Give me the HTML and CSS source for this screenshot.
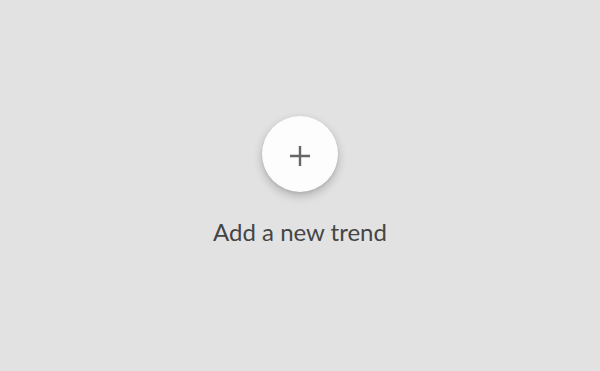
FILE: index.html
```html
<!DOCTYPE html>
<html lang="en">
<head>
    <meta charset="UTF-8">
    <title>Trends</title>
    <link rel="stylesheet" href="styles.css">
</head>
<body>
    <div class="empty-state">
        <button class="add-button" aria-label="Add a new trend">
            <svg width="22" height="22" viewBox="0 0 22 22">
                <path d="M11 1v20M1 11h20" stroke="#666" stroke-width="2.4" fill="none"/>
            </svg>
        </button>
        <p class="add-label">Add a new trend</p>
    </div>
</body>
</html>
```

FILE: styles.css
```css
:root {
    --bg: #e2e2e2;
    --text: #454545;
    --card: #fdfdfd;
}

html, body {
    margin: 0;
    height: 100%;
}

body {
    font-family: Lato, "Open Sans", sans-serif;
    background-color: var(--bg);
    color: var(--text);
}

.empty-state {
    display: flex;
    flex-direction: column;
    align-items: center;
    padding-top: 116px;
}

.add-button {
    width: 76px;
    height: 76px;
    border-radius: 50%;
    border: none;
    background: var(--card);
    box-shadow: 0 4px 10px rgba(0,0,0,0.22), 0 1px 3px rgba(0,0,0,0.08);
    display: flex;
    align-items: center;
    justify-content: center;
    padding: 0;
    padding-top: 4px;
    cursor: pointer;
}

.add-label {
    margin: 26px 0 0;
    font-size: 24px;
    line-height: 1.2;
}
```
